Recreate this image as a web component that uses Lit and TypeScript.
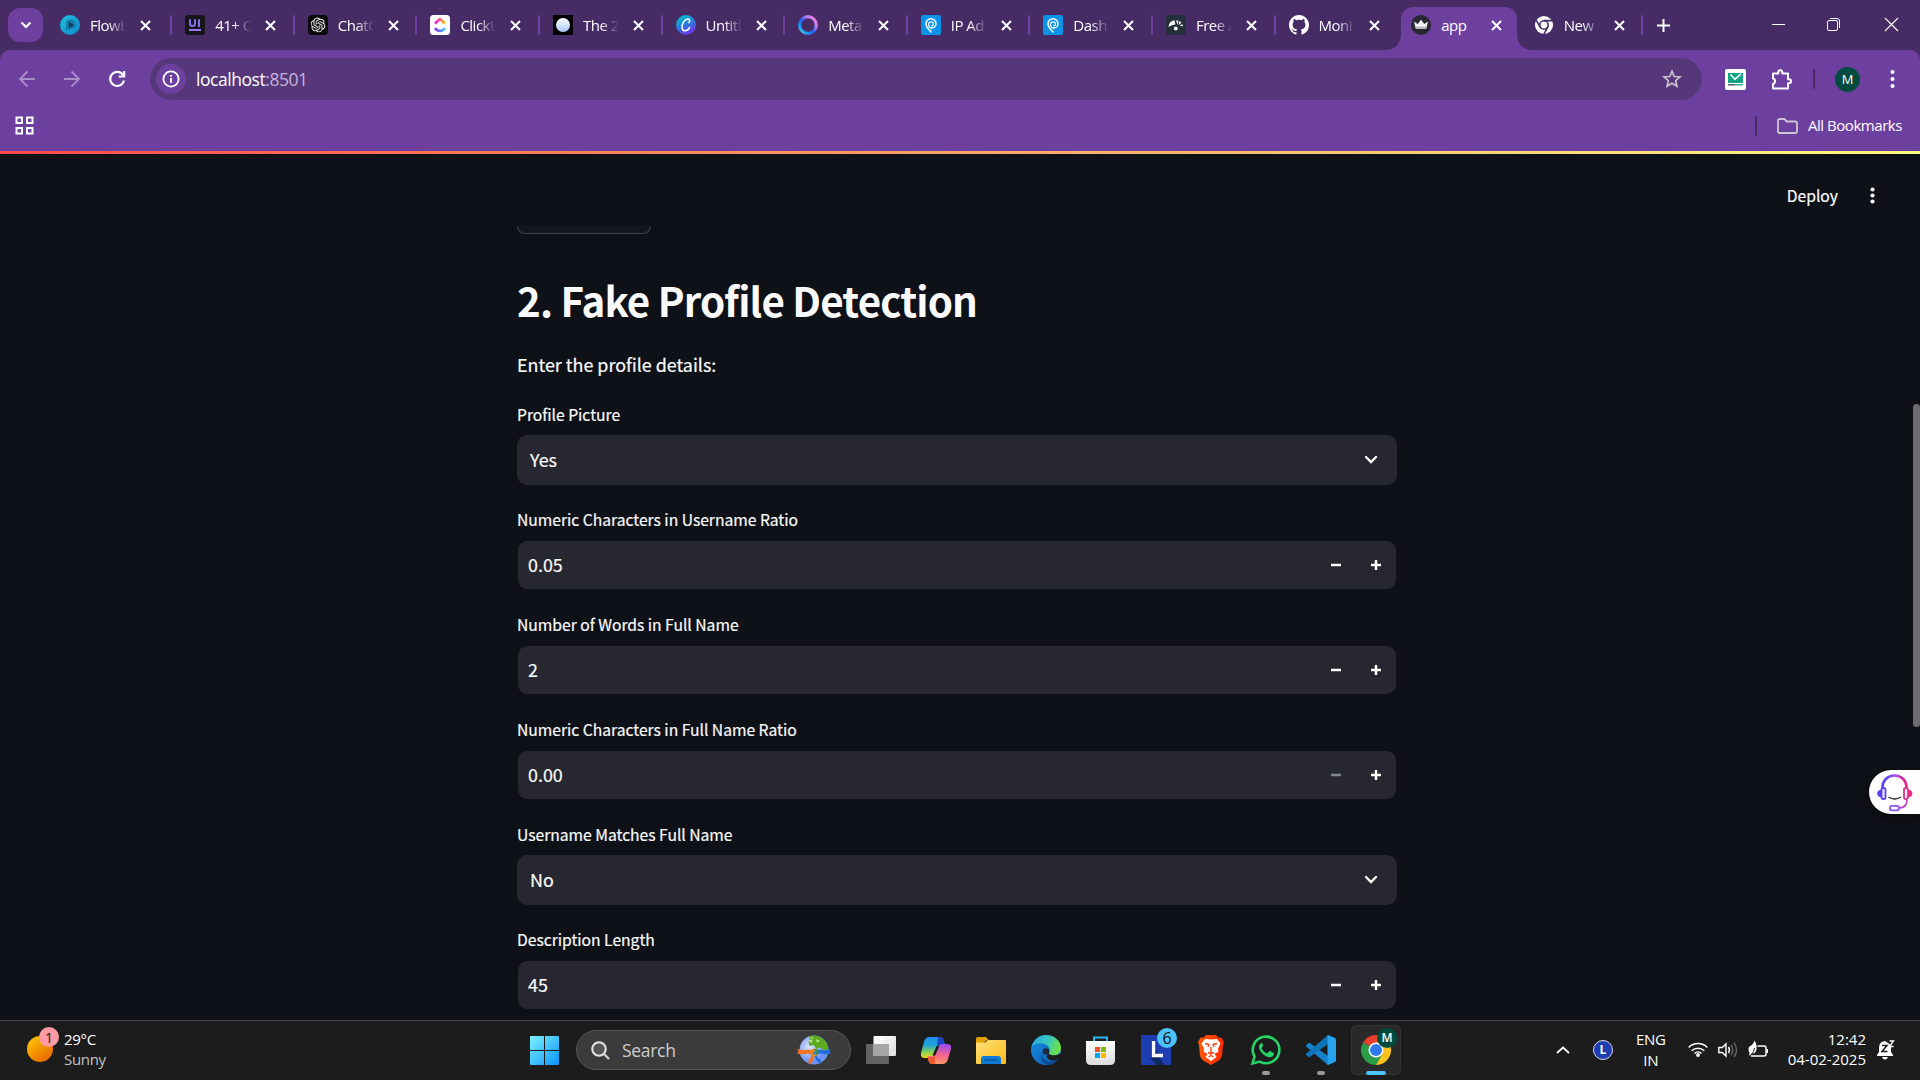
import { LitElement, html, svg, css, nothing, TemplateResult } from "lit";
import { customElement, property } from "lit/decorators.js";

type Art = TemplateResult;

const icon = (w: number, h: number, box: string, body: Art) =>
  html`<svg width=${w} height=${h} viewBox=${box} fill="none" style="display:block;flex:none;overflow:visible">${body}</svg>`;

const OPENAI =
  "M22.2819 9.8211a5.9847 5.9847 0 0 0-.5157-4.9108 6.0462 6.0462 0 0 0-6.5098-2.9A6.0651 6.0651 0 0 0 4.9807 4.1818a5.9847 5.9847 0 0 0-3.9977 2.9 6.0462 6.0462 0 0 0 .7427 7.0966 5.98 5.98 0 0 0 .511 4.9107 6.051 6.051 0 0 0 6.5146 2.9001A5.9847 5.9847 0 0 0 13.2599 24a6.0557 6.0557 0 0 0 5.7718-4.2058 5.9894 5.9894 0 0 0 3.9977-2.9001 6.0557 6.0557 0 0 0-.7475-7.0729zm-9.022 12.6081a4.4755 4.4755 0 0 1-2.8764-1.0408l.1419-.0804 4.7783-2.7582a.7948.7948 0 0 0 .3927-.6813v-6.7369l2.02 1.1686a.071.071 0 0 1 .038.052v5.5826a4.504 4.504 0 0 1-4.4945 4.4944zm-9.6607-4.1254a4.4708 4.4708 0 0 1-.5346-3.0137l.142.0852 4.783 2.7582a.7712.7712 0 0 0 .7806 0l5.8428-3.3685v2.3324a.0804.0804 0 0 1-.0332.0615L9.74 19.9502a4.4992 4.4992 0 0 1-6.1408-1.6464zM2.3408 7.8956a4.485 4.485 0 0 1 2.3655-1.9728V11.6a.7664.7664 0 0 0 .3879.6765l5.8144 3.3543-2.0201 1.1685a.0757.0757 0 0 1-.071 0l-4.8303-2.7865A4.504 4.504 0 0 1 2.3408 7.872zm16.5963 3.8558L13.1038 8.364 15.1192 7.2a.0757.0757 0 0 1 .071 0l4.8303 2.7913a4.4944 4.4944 0 0 1-.6765 8.1042v-5.6772a.79.79 0 0 0-.407-.667zm2.0107-3.0231l-.142-.0852-4.7735-2.7818a.7759.7759 0 0 0-.7854 0L9.409 9.2297V6.8974a.0662.0662 0 0 1 .0284-.0615l4.8303-2.7866a4.4992 4.4992 0 0 1 6.6802 4.66zM8.3065 12.863l-2.02-1.1638a.0804.0804 0 0 1-.038-.0567V6.0742a4.4992 4.4992 0 0 1 7.3757-3.4537l-.142.0805L8.704 5.459a.7948.7948 0 0 0-.3927.6813zm1.0976-2.3654l2.602-1.4998 2.6069 1.4998v2.9994l-2.5974 1.4997-2.6067-1.4997Z";
const GITHUB =
  "M8 0C3.58 0 0 3.58 0 8c0 3.54 2.29 6.53 5.47 7.59.4.07.55-.17.55-.38 0-.19-.01-.82-.01-1.49-2.01.37-2.53-.49-2.69-.94-.09-.23-.48-.94-.82-1.13-.28-.15-.68-.52-.01-.53.63-.01 1.08.58 1.23.82.72 1.21 1.87.87 2.33.66.07-.52.28-.87.51-1.07-1.78-.2-3.64-.89-3.64-3.95 0-.87.31-1.59.82-2.15-.08-.2-.36-1.02.08-2.12 0 0 .67-.21 2.2.82.64-.18 1.32-.27 2-.27s1.36.09 2 .27c1.53-1.04 2.2-.82 2.2-.82.44 1.1.16 1.92.08 2.12.51.56.82 1.27.82 2.15 0 3.07-1.87 3.75-3.65 3.95.29.25.54.73.54 1.48 0 1.07-.01 1.93-.01 2.2 0 .21.15.46.55.38A8.01 8.01 0 0 0 16 8c0-4.42-3.58-8-8-8z";

const pin = svg`<rect width="20" height="20" rx="2" fill="#0b93e8"/>
  <path d="M10.200 17C7 14 5 11.500 5 8.700a5 5 0 0 1 10 0c0 2.600-2 4.300-4.300 4.300" stroke="#fff" stroke-width="1.500" stroke-linecap="round"/><path d="M10.500 13.200c-2-.4-3-2-3-4.200a2.600 2.600 0 0 1 5.100-.2c0 1.300-.9 2-1.900 2.100" stroke="#fff" stroke-width="1.200" stroke-linecap="round"/>`;

const FAV: Record<string, Art> = {
  flow: svg`<defs><linearGradient id="fl" x1="0" y1="0" x2="1" y2="1"><stop stop-color="#1cc0e0"/><stop offset="1" stop-color="#1288c8"/></linearGradient></defs>
    <circle cx="10" cy="10" r="10" fill="url(#fl)"/><path d="M6 15.500V8q0-3.500 4.500-3.500T16 8.500q.5 4.500-4 5.500-4 .8-6 1.500z" fill="#127fae"/><path d="M8.500 6.500 14 10l-5 3.500z" fill="#113a66"/>`,
  ui: svg`<rect width="20" height="20" rx="3" fill="#15151a"/><path d="M5 4.200v4.300a2.500 2.500 0 0 0 5 0V4.200M14 4.200V12" stroke="#8170f2" stroke-width="2"/><path d="M4 15h12" stroke="#9a78f5" stroke-width="2"/>`,
  gpt: svg`<rect width="20" height="20" rx="4" fill="#0a0a0a"/><path transform="translate(2.600 2.600) scale(.615)" d=${OPENAI} fill="#f1f1f1"/>`,
  click: svg`<rect width="20" height="20" rx="3.500" fill="#fff"/><defs><linearGradient id="c1"><stop stop-color="#ff02f0"/><stop offset="1" stop-color="#ffc800"/></linearGradient><linearGradient id="c2"><stop stop-color="#8930fd"/><stop offset="1" stop-color="#49ccf9"/></linearGradient></defs>
    <path d="m5 8.500 5-4.500 5 4.500" stroke="url(#c1)" stroke-width="2.600"/><path d="M4.800 13.300q5.200 5.200 10.400 0" stroke="url(#c2)" stroke-width="2.800"/>`,
  the: svg`<defs><linearGradient id="tg" x1="0" y1="0" x2="0" y2="1"><stop stop-color="#fff"/><stop offset="1" stop-color="#a9c8fb"/></linearGradient></defs><rect width="20" height="20" fill="#000"/><circle cx="10" cy="10" r="7" fill="url(#tg)"/>`,
  canva: svg`<defs><linearGradient id="cv" x1=".2" y1="0" x2=".7" y2="1"><stop stop-color="#00c4cc"/><stop offset=".5" stop-color="#2a7be0"/><stop offset="1" stop-color="#7d2ae8"/></linearGradient></defs><circle cx="10" cy="10" r="10" fill="url(#cv)"/>
    <path d="M13 7.600c1.400-1.700.6-3.800-1.500-3.500C8.600 4.500 6 8.500 6 11.800c0 2.600 1.300 4 3 4 1.900 0 3.600-1.300 4.600-3.300" stroke="#fff" stroke-width="1.500" stroke-linecap="round"/>`,
  meta: svg`<defs><linearGradient id="mg" x1="1" y1="0" x2="0" y2="1"><stop stop-color="#ff7bd0"/><stop offset=".3" stop-color="#b77cf5"/><stop offset=".55" stop-color="#1b62f0"/><stop offset=".8" stop-color="#1a9bf5"/><stop offset="1" stop-color="#6ff0d8"/></linearGradient></defs><circle cx="10" cy="10" r="8.300" stroke="url(#mg)" stroke-width="3.300"/>`,
  pin,
  free: svg`<rect width="20" height="20" rx="3.500" fill="#262f3c"/><path d="M2.500 12Q3 6 8.500 5.200l.8 4.300Q5.500 9.500 2.500 12z" fill="#fff"/><path d="m10 5.500 2.500.3-1 4zM13.500 6l2 1.500-3 2.700zM16 9l1.300 2.300-3.500-.2z" fill="#fff"/><circle cx="9.800" cy="13.500" r="1.900" fill="#fff"/>`,
  github: svg`<path transform="scale(1.250)" d=${GITHUB} fill="#fff"/>`,
  crown: svg`<circle cx="10" cy="10" r="10" fill="#262730"/><path d="m3 6.500 3.700 2.600L10 4.800l3.300 4.300L17 6.500l-1.800 7.300H4.800z" fill="#f4f4f4"/><path d="m4.300 11.500.6 2.300h10.300l.5-2.300z" fill="#b9b9bd"/>`,
  chrome: svg`<circle cx="10" cy="10" r="9" fill="#fff"/><circle cx="10" cy="10" r="4.200" fill="#fff" stroke="#462b65" stroke-width="1.600"/><path d="M10 5.600h8M6.200 12.200 2.300 5.300M13.800 12.200l-4 7" stroke="#462b65" stroke-width="1.600"/>`,
};

const TABS: { fav: string; text: string; active?: boolean }[] = [
  { fav: "flow", text: "Flowb" },
  { fav: "ui", text: "41+ C" },
  { fav: "gpt", text: "ChatG" },
  { fav: "click", text: "ClickU" },
  { fav: "the", text: "The 2" },
  { fav: "canva", text: "Untitl" },
  { fav: "meta", text: "Meta" },
  { fav: "pin", text: "IP Ad" },
  { fav: "pin", text: "Dash" },
  { fav: "free", text: "Free A" },
  { fav: "github", text: "Moni" },
  { fav: "crown", text: "app", active: true },
  { fav: "chrome", text: "New" },
];

const UI_FONT = css`"Open Sans", "Noto Sans", sans-serif`;
const APP_FONT = css`"Noto Sans CJK JP", "Noto Sans", sans-serif`;

@customElement("browser-tabs")
class BrowserTabs extends LitElement {
  static styles = css`
    :host { display: flex; height: 50px; background: #462b65; padding-left: 8px; box-sizing: border-box; font: 15px ${UI_FONT}; color: #fff; }
    .drop { width: 35px; height: 34px; margin: 8px 4px 0 0; border-radius: 12px; background: #6d40a0; display: grid; place-items: center; flex: none; }
    .tab { position: relative; display: flex; align-items: center; width: 122.600px; box-sizing: border-box; padding-left: 13px; flex: none; }
    .tab.first { width: 125.200px; }
    .tab.sep::after { content: ""; position: absolute; right: 0; top: 15px; width: 2px; height: 20px; border-radius: 1px; background: #6d40a0; }
    .title { width: 36px; margin-left: 10px; height: 24px; line-height: 24px; white-space: nowrap; letter-spacing: -0.500px; mask-image: linear-gradient(90deg, #000 50%, transparent 100%); }
    .active .title { mask-image: none; }
    .close { position: relative; margin-left: 14px; }
    .shape { position: absolute; left: 3px; right: 3.500px; top: 7px; bottom: 0; border-radius: 12px 12px 0 0; background: #6d40a0; }
    .shape::before, .shape::after { content: ""; position: absolute; bottom: 0; width: 14px; height: 14px; }
    .shape::before { right: 100%; background: radial-gradient(circle at 0 0, transparent 13.500px, #6d40a0 14px); }
    .shape::after { left: 100%; background: radial-gradient(circle at 100% 0, transparent 13.500px, #6d40a0 14px); }
    .active > svg, .active > .title { position: relative; }
    .plus { margin-left: 14px; align-self: center; }
    .win { margin-left: auto; display: flex; align-items: center; padding: 0 22px 2px 0; }
    .win svg { margin-left: 42px; }
    .win svg:last-child { margin-left: 45px; }
  `;
  render() {
    const cross = svg`<path d="m1 1 9 9M10 1l-9 9" stroke="#fff" stroke-width="2"/>`;
    return html`
      <div class="drop">${icon(12, 8, "0 0 12 8", svg`<path d="m1.500 1.500 4.500 4.500 4.500-4.500" stroke="#fff" stroke-width="2.200"/>`)}</div>
      ${TABS.map((t, i) => html`
        <div class="tab ${i === 0 ? "first" : ""} ${t.active ? "active" : ""} ${i === 10 || i === 11 ? "" : "sep"}">
          ${t.active ? html`<div class="shape"></div>` : nothing}
          ${icon(20, 20, "0 0 20 20", FAV[t.fav])}
          <div class="title">${t.text}</div>
          <div class="close">${icon(11, 11, "0 0 11 11", cross)}</div>
        </div>`)}
      <div class="plus">${icon(13, 13, "0 0 13 13", svg`<path d="M6.500 0v13M0 6.500h13" stroke="#fff" stroke-width="2"/>`)}</div>
      <div class="win">
        ${icon(13, 13, "0 0 13 13", svg`<path d="M0 6.500h13" stroke="#fff"/>`)}
        ${icon(13, 13, "0 0 13 13", svg`<rect x=".5" y="2.500" width="10" height="10" rx="1.500" stroke="#fff"/><path d="M3 .500h7a2.500 2.500 0 0 1 2.500 2.500v7" stroke="#fff"/>`)}
        ${icon(13, 13, "0 0 13 13", svg`<path d="m0 0 13 13M13 0 0 13" stroke="#fff" stroke-width="1.100"/>`)}
      </div>`;
  }
}

@customElement("browser-toolbar")
class BrowserToolbar extends LitElement {
  static styles = css`
    :host { display: block; background: #462b65; font-family: ${UI_FONT}; color: #fff; }
    .panel { height: 101px; background: #6d40a0; border-radius: 10px 10px 0 0; }
    .row { display: flex; align-items: center; height: 58px; }
    .nav { display: flex; gap: 27px; padding-left: 18px; width: 132px; }
    .omni { display: flex; align-items: center; width: 1552px; height: 42px; border-radius: 21px; background: #56387a; box-sizing: border-box; padding: 0 20px 0 6px; }
    .info { width: 30px; height: 30px; border-radius: 50%; background: #6d40a0; display: grid; place-items: center; }
    .url { margin-left: 10px; font-size: 17.500px; line-height: 24px; letter-spacing: -0.450px; flex: 1; }
    .url span { color: #c5b3d9; }
    .ext { display: flex; align-items: center; padding-left: 23px; }
    .sep { width: 2px; height: 20px; border-radius: 1px; background: #462b65; }
    .avatar { width: 25px; height: 25px; border-radius: 50%; background: #004d40; font-size: 13px; line-height: 25px; text-align: center; }
    .book { display: flex; align-items: center; height: 43px; padding: 0 18px 0 15px; margin-top: -4px; }
    .all { font-size: 15px; letter-spacing: -0.450px; line-height: 22px; white-space: nowrap; padding-bottom: 2px; }
  `;
  render() {
    const gap = (n: number) => html`<div style="width:${n}px"></div>`;
    return html`<div class="panel">
      <div class="row">
        <div class="nav">
          ${icon(18, 18, "0 0 18 18", svg`<path d="M17 9H2M9.500 1.500 2 9l7.500 7.500" stroke="#a88cc8" stroke-width="1.800"/>`)}
          ${icon(18, 18, "0 0 18 18", svg`<path d="M1 9h15M8.500 1.500 16 9l-7.500 7.500" stroke="#a88cc8" stroke-width="1.800"/>`)}
          ${icon(18, 18, "0 0 18 18", svg`<path d="M15 5A7 7 0 1 0 16 10.500M16.200 1v5.500h-5.500" stroke="#fff" stroke-width="2.100"/>`)}
        </div>
        <div class="omni">
          <div class="info">${icon(18, 18, "0 0 18 18", svg`<circle cx="9" cy="9" r="7.600" stroke="#fff" stroke-width="1.800"/><path d="M9 8v5M9 5v1.800" stroke="#fff" stroke-width="1.800"/>`)}</div>
          <div class="url">localhost<span>:8501</span></div>
          ${icon(20, 20, "0 0 20 20", svg`<path d="m10 2.200 2.200 5.300 5.700.5-4.300 3.700 1.300 5.600-4.900-3-4.900 3 1.300-5.600L2.100 8l5.700-.5z" stroke="#c9c5cc" stroke-width="1.700"/>`)}
        </div>
        <div class="ext">
          ${icon(21, 21, "0 0 21 21", svg`<rect width="21" height="21" rx="2" fill="#fff"/><rect x="3" y="4" width="15" height="10" fill="#14a383"/><path d="m5.500 5.500 4.500 4.700L16 5" stroke="#fff" stroke-width="1.600"/><path d="M3 15.800h7" stroke="#27424a" stroke-width="1.300"/><path d="M10 15.800h8" stroke="#14a383" stroke-width="1.300"/>`)}
          ${gap(25)}
          ${icon(21, 21, "0 0 21 21", svg`<path d="M2 4.500h5.300V3.300a2 2 0 0 1 4 0v1.200H17v5.800h1a2 2 0 0 1 0 4h-1v5.200H2v-4.600a2.800 2.800 0 0 0 0-5.400z" stroke="#fff" stroke-width="2" stroke-linejoin="round"/>`)}
          ${gap(21)}<div class="sep"></div>${gap(20)}
          <div class="avatar">M</div>
          ${gap(30)}
          ${icon(5, 18, "0 0 5 18", svg`<circle cx="2.500" cy="2" r="2" fill="#fff"/><circle cx="2.500" cy="9" r="2" fill="#fff"/><circle cx="2.500" cy="16" r="2" fill="#fff"/>`)}
        </div>
      </div>
      <div class="book">
        ${icon(19, 19, "0 0 19 19", svg`<path d="M1.500 1.500h5.500v5.500H1.500zM12 1.500h5.500v5.500H12zM1.500 12h5.500v5.500H1.500zM12 12h5.500v5.500H12z" stroke="#fff" stroke-width="2"/>`)}
        <div style="flex:1"></div>
        <div class="sep"></div>${gap(20)}
        ${icon(21, 16, "0 0 21 16", svg`<path d="M1 2.500q0-1.500 1.500-1.500h5l2 2.500h9q1.500 0 1.500 1.500v8.500q0 1.500-1.500 1.500h-16Q1 15 1 13.500z" stroke="#cdc6d4" stroke-width="1.800"/>`)}
        ${gap(9.5)}<div class="all">All Bookmarks</div>
      </div>
    </div>`;
  }
}

@customElement("form-field")
class FormField extends LitElement {
  @property() label = "";
  @property() value = "";
  @property() kind = "number";
  @property({ type: Boolean }) floor = false;
  static styles = css`
    :host { display: block; height: 105px; color: #fafafa; font-family: ${APP_FONT}; -webkit-text-stroke: 0.200px #fafafa; }
    .label { font-size: 15.700px; line-height: 25px; height: 33px; white-space: nowrap; letter-spacing: -0.030px; }
    .box { display: flex; align-items: center; height: 48px; margin: 1px; border-radius: 9px; background: #262730; font-size: 17.900px; box-sizing: border-box; padding: 0 15px 0 10px; line-height: 28px; }
    .box.select { height: 50px; margin: 0; border-radius: 10px; padding: 0 19px 0 13px; }
    .value { flex: 1; padding-bottom: 2px; }
    .steps { display: flex; gap: 30px; }
  `;
  render() {
    return html`<div class="label">${this.label}</div>
      <div class="box ${this.kind}">
        <div class="value">${this.value}</div>
        ${this.kind === "select"
          ? icon(14, 10, "0 0 14 10", svg`<path d="m2 2 5 5 5-5" stroke="#fafafa" stroke-width="2.400" stroke-linecap="round"/>`)
          : html`<div class="steps">
              ${icon(10, 10, "0 0 8 8", svg`<path d="M0 3v2h8V3H0z" fill=${this.floor ? "#808495" : "#fff"}/>`)}
              ${icon(10, 10, "0 0 8 8", svg`<path d="M3 0v3H0v2h3v3h2V5h3V3H5V0z" fill="#fff"/>`)}
            </div>`}
      </div>`;
  }
}

@customElement("profile-page")
class ProfilePage extends LitElement {
  static styles = css`
    :host { display: block; position: relative; height: 869px; background: #0e1117; color: #fafafa; font-family: ${APP_FONT}; overflow: hidden; }
    .line { height: 3px; background: linear-gradient(90deg, #ff4b4b, #fffd80); }
    .head { display: flex; align-items: center; justify-content: flex-end; padding: 11px 45px 0 0; height: 61px; }
    .deploy { font-size: 15.700px; line-height: 24px; margin-right: 32px; -webkit-text-stroke: 0.200px #fafafa; }
    .body { width: 880px; margin-left: 517px; height: 794px; overflow: hidden; }
    .btn { width: 134px; height: 8px; box-sizing: border-box; border: 1px solid #41444c; border-top: 0; border-radius: 0 0 10px 10px; background: #131720; }
    h2 { margin: 39px 0 0; font-size: 40.300px; font-weight: 700; line-height: 54px; white-space: nowrap; letter-spacing: -0.850px; }
    p { margin: 22px 0 23px; font-size: 17.900px; line-height: 30px; -webkit-text-stroke: 0.200px #fafafa; }
    .scroll { position: absolute; right: 0; top: 253px; width: 7px; height: 323px; border-radius: 4px; background: #6b6c70; }
    .help { position: absolute; right: 0; top: 619px; width: 51px; height: 44px; border-radius: 22px 0 0 22px; background: #fff; box-shadow: 0 3px 12px #0008; }
    .help svg { margin: 3px 0 0 7px; }
  `;
  render() {
    return html`
      <div class="line"></div>
      <div class="head"><div class="deploy">Deploy</div>
        ${icon(5, 17, "0 0 5 17", svg`<circle cx="2.500" cy="2.500" r="2.100" fill="#fafafa"/><circle cx="2.500" cy="8.500" r="2.100" fill="#fafafa"/><circle cx="2.500" cy="14.500" r="2.100" fill="#fafafa"/>`)}
      </div>
      <div class="body">
        <div class="btn"></div>
        <h2>2. Fake Profile Detection</h2>
        <p>Enter the profile details:</p>
        <form-field kind="select" label="Profile Picture" value="Yes"></form-field>
        <form-field label="Numeric Characters in Username Ratio" value="0.05"></form-field>
        <form-field label="Number of Words in Full Name" value="2"></form-field>
        <form-field label="Numeric Characters in Full Name Ratio" value="0.00" floor></form-field>
        <form-field kind="select" label="Username Matches Full Name" value="No"></form-field>
        <form-field label="Description Length" value="45"></form-field>
      </div>
      <div class="scroll"></div>
      <div class="help">${icon(37, 39, "0 0 37 39", svg`
        <defs><linearGradient id="hg"><stop stop-color="#4a3cf0"/><stop offset=".5" stop-color="#9a50f0"/><stop offset="1" stop-color="#ee1a7a"/></linearGradient></defs>
        <path d="M6.500 15C6.500 7 12 2.500 18.500 2.500S30.500 7 30.500 15" stroke="url(#hg)" stroke-width="2.600"/>
        <rect x="5.500" y="15" width="4" height="11" rx="1.800" fill="#e9e4ff" stroke="#5a45f2" stroke-width="1.800"/><rect x="28" y="15" width="4" height="11" rx="1.800" fill="#ffe4f2" stroke="#d43a9c" stroke-width="1.800"/>
        <path d="M5 17q-3.500.5-3.500 3.500T5 24z" fill="#5a45f2" stroke="#5a45f2"/><path d="M32.500 17q3.500.5 3.500 3.500t-3.500 3.500z" fill="#ec2a86" stroke="#ec2a86"/>
        <path d="M31 26.500q0 8.500-8 8.500" stroke="#c04ac4" stroke-width="1.800"/><rect x="14" y="32.800" width="9" height="4.600" rx="2" fill="#fff" stroke="#8f55f2" stroke-width="1.800"/>
        <path d="M12.500 24q6 4 12.500 0" stroke="#222" stroke-width="1.300"/>`)}</div>`;
  }
}

const win = svg`<defs><linearGradient id="wg" x1="0" y1="0" x2="1" y2="1"><stop stop-color="#7df2ff"/><stop offset="1" stop-color="#0a93fb"/></linearGradient></defs>
  <path d="M1 0h13v14H0V1q0-1 1-1zM15 0h13q1 0 1 1v13H15zM0 15h14v14H1q-1 0-1-1zM15 15h14v13q0 1-1 1H15z" fill="url(#wg)"/>`;
const globe = svg`<defs><radialGradient id="gg" cx=".35" cy=".4"><stop stop-color="#dfeaff"/><stop offset="1" stop-color="#6f92f5"/></radialGradient></defs>
  <circle cx="17" cy="15" r="14.500" fill="url(#gg)"/><path d="M12 1.500Q18-1 24 2.500q7 4.500 7.500 12.500l-5 .5-3-3-4 1.500-3-4-4 1-1-4 2-1.500z" fill="#5cab1f"/><path d="M11 5l5 0-2 3zM19 4l4 2-3 2zM13 2.500l4 .3-2 1.400z" fill="#b5e48e"/>
  <path d="M0 14q6 1.500 12.500.5l4 2.500-1.500 3-4-1.500Q5 20 0 18.500l1.500-2z" fill="#f4711f"/><path d="M34 14q-6 2-12 .5l-4 2.500 1 3 4-1.500q6 1.500 11 0l-1.500-2z" fill="#246fe5"/>
  <path d="M15 18.500q-1 5-4 8l2 3q4-4 4.500-9z" fill="#f4711f"/><path d="M18.500 18.500q2 5 6 7l-2 3q-4-3-5.500-8z" fill="#246fe5"/>
  <path d="M13.500 15.500q4-4 7 0v4.500q-3.500 3-6.500 0z" fill="#e58b1c"/><path d="M17 14q4-.5 5 3l-3 4q1-4-2-7z" fill="#2c8f52"/><path d="M16.500 16.500h2v3h-2z" fill="#246fe5"/>`;
const task = svg`<defs><linearGradient id="t1" x1="0" y1="0" x2="1" y2="1"><stop stop-color="#fff"/><stop offset="1" stop-color="#ddd"/></linearGradient></defs><rect x="0" y="8" width="23" height="20" rx="1" fill="#636363"/><rect x="7.500" y="0" width="22.500" height="20" rx="1" fill="url(#t1)"/><path d="M7.500 8H22q1 0 1 1v11H8.500q-1 0-1-1z" fill="#a6a6a6"/>`;
const copilot = svg`<defs><linearGradient id="p1" x1="0" y1="0" x2="0" y2="1"><stop stop-color="#1a8fe8"/><stop offset=".4" stop-color="#22a4d8"/><stop offset=".7" stop-color="#7fcf5a"/><stop offset="1" stop-color="#f5d71c"/></linearGradient><linearGradient id="p2" x1=".5" y1="0" x2=".3" y2="1"><stop stop-color="#a24bea"/><stop offset=".5" stop-color="#f2648e"/><stop offset="1" stop-color="#ffa061"/></linearGradient></defs>
  <path d="M9 0h10q3 0 4 5l1 3h-5q-3 0-4 4l-2 6q-1 3-5 3H4q-5 0-4-5L3 5q1-5 6-5z" fill="url(#p1)"/><path d="M17 0h2q3 0 4 5l1 3h-5q-2 0-3 1z" fill="#1d44c4"/>
  <path d="M21 27H11q-3 0-4-5l-1-3h5q3 0 4-4l2-5q1-3 5-3h4q5 0 4 5l-3 10q-1 5-6 5z" fill="url(#p2)"/><path d="M14 27h-3q-3 0-4-5l-.500-2H11q2 0 3-1z" fill="#ef5a30"/><path d="m15.500 9-4 9.500h2.800l4-9.500z" fill="#1c1c1c"/>`;
const folder = svg`<defs><linearGradient id="f1" x1="0" y1="0" x2="1" y2="1"><stop stop-color="#ffe07a"/><stop offset="1" stop-color="#fbbc16"/></linearGradient></defs><path d="M0 1.500Q0 0 1.500 0H10l3 3.500h-3L8 6H0z" fill="#e0a000"/><path d="M0 5.500h9l3-2.500h17q1 0 1 1v22q0 1-1 1H1q-1 0-1-1z" fill="url(#f1)"/><path d="M5 27v-5q0-3 3-3h14q3 0 3 3v5z" fill="#0f7ad6"/><path d="M8.500 23h13" stroke="#0a4f95" stroke-width="1.300"/>`;
const edge = svg`<defs><linearGradient id="e1" x1="0" y1="0" x2="1" y2=".3"><stop stop-color="#2aa8e8"/><stop offset=".6" stop-color="#37c6c0"/><stop offset="1" stop-color="#6be04a"/></linearGradient><linearGradient id="e2" x1="0" y1="0" x2="1" y2="1"><stop stop-color="#1589dc"/><stop offset="1" stop-color="#0e5fb6"/></linearGradient></defs>
  <circle cx="15" cy="15" r="15" fill="#1272c9"/><path d="M.5 12.500C2 5 8 0 15 0c8.500 0 15 6 15 13 0 5-4 7.500-8 7.500-3 0-4.600-1-4.600-2.200 0-1 1.300-1.500 1.300-3.500C18.700 11 14 8.500 9.500 8.500c-4 0-7.300 1.500-9 4z" fill="url(#e1)"/><path d="M.3 12.500C2 10 5.500 8.500 9.500 8.500c3 0 6 1.200 7.500 3-4 .5-7 4-7 8 0 5 4 9.500 9 10C9 32-.5 24.500.3 12.500z" fill="url(#e2)"/><path d="M11 17c-1 7 6 12.500 16 7.500-2 3-6 5.200-9.500 5.400C11 28 8.500 22 11 17z" fill="#0c4a94"/><path d="M17.500 18c1 2 5 3.500 10.500 1.200L31 18v5l-3 1.200c-7 3-12 .8-12.500-3.200z" fill="#1c1c1c"/><circle cx="15" cy="16.500" r="3.300" fill="#1c2a3c"/>`;
const store = svg`<defs><linearGradient id="s1" x1="0" y1="0" x2="0" y2="1"><stop stop-color="#fff"/><stop offset="1" stop-color="#dcdcdc"/></linearGradient></defs><path d="M8 7V1.500h13V7" stroke="#2fb8ec" stroke-width="2"/><path d="M0 5h29v19q0 5-5 5H5q-5 0-5-5z" fill="url(#s1)"/><path d="M9 11h5v5H9z" fill="#f25022"/><path d="M15 11h5v5h-5z" fill="#7fba00"/><path d="M9 17h5v5H9z" fill="#00a4ef"/><path d="M15 17h5v5h-5z" fill="#ffb900"/>`;
const lApp = svg`<rect width="30" height="30" fill="#1e3db0"/><path d="M10 6v18l5 6h8z" fill="#102a66"/><path d="M12.500 6v14.500H22" stroke="#fff" stroke-width="3.400"/>`;
const brave = svg`<defs><linearGradient id="b1"><stop stop-color="#ff5a00"/><stop offset="1" stop-color="#ff2600"/></linearGradient></defs><path d="M8 0h10l2.500 2.800 3-.3L26 7l-1 3-1 11q-1 3-4 5l-7 4-7-4q-3-2-4-5L1 10 0 7l2.500-4.500 3 .3z" fill="url(#b1)"/><path d="m13 4.500 6-.5 3.500 4.500-2.500 5 .5 3-4 2.500 2 3-5.500 4-5.500-4 2-3-4-2.500.5-3-2.500-5L7 4z" fill="#fff"/><path d="m7 8.500 4 1-1 2.500M19 8.500l-4 1 1 2.500M13 12v6M10 17.500l3 1.500 3-1.500M10.500 22l2.500-1.500 2.500 1.500" stroke="#fb4210" stroke-width="1.400"/>`;
const whats = svg`<path d="m1.500 28.500 2-7A13.300 13.300 0 1 1 8.700 26.600z" stroke="#25d366" stroke-width="2.600"/><path d="M10.700 8c-.6 0-2.700 1-2.700 4 0 2.500 2.200 5.500 4.200 7.300 2.200 1.900 4.500 3 6.800 3 2 0 3.800-1.500 3.800-3.200 0-.9 0-1.100-.4-1.300l-3.400-1.700c-.4-.2-.7-.1-1 .3l-1.400 1.700c-.3.300-.5.400-1 .100-2.200-1-3.900-2.600-5-4.600-.2-.4-.1-.6.200-.9l1-1.300c.2-.4.200-.6.100-1L11.700 8.400c-.2-.4-.5-.4-1-.4z" fill="#25d366"/>`;
const code = svg`<path d="M0 10.500 3 7.500 22 21v9L0 11.500z" fill="#1482cb"/><path d="M0 20 3 22.500 22 9V0L0 18.800z" fill="#0f73b8"/><path d="m22 0 7 3q1 .5 1 1.500v21q0 1-1 1.500l-7 3-.5-.5v-29z" fill="#26a2ee"/>`;
const chrome = svg`<path d="M15 15 2 7.500a15 15 0 0 1 26 0z" fill="#e8402f"/><path d="M15 15 2 7.500A15 15 0 0 0 15 30l7-11z" fill="#2b9d49"/><path d="M15 7.500h13A15 15 0 0 1 15 30l6.500-11.200z" fill="#fcc31e"/><circle cx="15" cy="15" r="7.500" fill="#fff"/><circle cx="15" cy="15" r="6" fill="#2d7bea"/>`;

@customElement("task-bar")
class TaskBar extends LitElement {
  static styles = css`
    :host { display: flex; height: 60px; box-sizing: border-box; border-top: 1px solid #454545; background: #1c1c1c; font: 15px/20px ${UI_FONT}; color: #fff; letter-spacing: -0.300px; }
    .weather { display: flex; width: 516px; box-sizing: border-box; padding: 8px 0 0 27px; }
    .sun { position: relative; width: 26px; height: 26px; margin: 7px 11px 0 0; border-radius: 50%; background: linear-gradient(145deg, #ffc400 10%, #e86400 90%); }
    .dot { position: absolute; right: -6px; top: -9px; width: 20px; height: 20px; border-radius: 50%; background: #ff99a4; color: #222; text-align: center; }
    .dim { color: #c4c4c4; }
    .apps { display: flex; }
    .slot { position: relative; width: 55px; display: grid; place-items: center; padding-bottom: 1px; }
    .slot.start { width: 56px; }
    .search { display: flex; align-items: center; width: 275px; height: 40px; margin: 9px 2px 0 4px; border-radius: 20px; box-sizing: border-box; border: 1px solid #555; background: #3b3b3b; font-size: 17.500px; color: #cfcfcf; padding: 0 19px 0 14px; }
    .search span { flex: 1; margin-left: 12px; }
    .tile { width: 50px; height: 50px; border-radius: 6px; background: #292929; box-shadow: inset 0 0 0 1px #343434; display: grid; place-items: center; }
    .badge { position: absolute; left: 29px; top: 7px; width: 20px; height: 20px; border-radius: 50%; background: #4cc2ff; color: #111; text-align: center; font-size: 16px; }
    .badge.m { background: #004d40; color: #fff; font-size: 12px; font-weight: 600; }
    .run { position: absolute; bottom: 5px; left: 23.500px; width: 8px; height: 4px; border-radius: 2px; background: #9a9a9a; }
    .run.on { left: 17.500px; width: 20px; background: #4cc2ff; }
    .tray { margin-left: auto; display: flex; align-items: center; padding: 0 26px 2px 0; }
    .lang { text-align: center; width: 40px; line-height: 20.500px; }
    .clock { text-align: right; white-space: nowrap; letter-spacing: 0; padding-bottom: 2px; }
    .coin { width: 18px; height: 18px; border: 1px solid #d8d8e8; border-radius: 50%; background: #1e3db0; font: 700 12px/18px ${UI_FONT}; text-align: center; }
  `;
  render() {
    const slot = (w: number, h: number, body: Art, extra: unknown = nothing) =>
      html`<div class="slot">${icon(w, h, `0 0 ${w} ${h}`, body)}${extra}</div>`;
    const gap = (n: number) => html`<div style="width:${n}px"></div>`;
    return html`
      <div class="weather"><div class="sun"><div class="dot">1</div></div><div>29°C<div class="dim">Sunny</div></div></div>
      <div class="apps">
        <div class="slot start">${icon(29, 29, "0 0 29 29", win)}</div>
        <div class="search">${icon(19, 19, "0 0 19 19", svg`<circle cx="8" cy="8" r="6.800" fill="#555" stroke="#e6e6e6" stroke-width="2"/><path d="m13 13 5 5" stroke="#d0d0d0" stroke-width="2.400"/>`)}<span>Search</span>${icon(34, 30, "0 0 34 30", globe)}</div>
        ${slot(30, 28, task)}${slot(30, 27, copilot)}${slot(30, 27, folder)}${slot(30, 30, edge)}${slot(29, 29, store)}
        ${slot(30, 30, lApp, html`<div class="badge">6</div>`)}
        ${slot(26, 30, brave)}
        ${slot(30, 30, whats, html`<div class="run"></div>`)}
        ${slot(30, 30, code, html`<div class="run"></div>`)}
        <div class="slot"><div class="tile">${icon(30, 30, "0 0 30 30", chrome)}</div><div class="badge m">M</div><div class="run on"></div></div>
      </div>
      <div class="tray">
        ${icon(14, 8, "0 0 14 8", svg`<path d="m1 7 6-5.500L13 7" stroke="#fff" stroke-width="1.700"/>`)}
        ${gap(23)}<div class="coin">L</div>${gap(18)}
        <div class="lang">ENG<br />IN</div>${gap(17)}
        ${icon(20, 15, "0 0 20 15", svg`<path d="M.7 5.500a13 13 0 0 1 18.600 0M3.700 8.700a9 9 0 0 1 12.600 0M6.500 11.500a5 5 0 0 1 7 0" stroke="#fff" stroke-width="1.500"/><circle cx="10" cy="13" r="1.900" fill="#fff"/>`)}
        ${gap(10)}
        ${icon(20, 16, "0 0 20 16", svg`<path d="M.8 5.500h3.500L8 2v12l-3.700-3.500H.8z" stroke="#fff" stroke-width="1.400"/><path d="M10.500 5q2 3 0 6" stroke="#fff" stroke-width="1.400"/><path d="M13 3q3.500 5 0 10M16 .800q5 7.200 0 14.400" stroke="#666" stroke-width="1.400"/>`)}
        ${gap(10)}
        ${icon(20, 18, "0 -1 20 18", svg`<path d="M9.500 4H16q2 0 2 2v6q0 2-2 2H3" stroke="#fff" stroke-width="1.500"/><path d="M18.500 7h1.500v4h-1.500z" fill="#fff"/><path d="M6.500-1.500Q9.500 3 8.300 8.500 7 12 4 11.500L1.500 14V11Q-.5 7 1.500 4.500 5 3 6.500-1.500z" fill="#fff"/><path d="M3 13q3-3 3.500-7" stroke="#1c1c1c"/>`)}
        ${gap(20)}
        <div class="clock">12:42<br />04-02-2025</div>
        ${gap(11)}
        ${icon(17, 20, "0 0 17 20", svg`<path d="M8 1Q2 1.500 2 8v4l-2 3v1h16v-1l-2-3V5z" fill="#fff"/><path d="M5 17h6q-1 2.500-3 2.500T5 17z" fill="#fff"/><path d="M12.500 1h4l-4 5.500h4" stroke="#fff" stroke-width="1.300"/><path d="M5 5.500h5l-5 6h5.500" stroke="#1c1c1c" stroke-width="1.500"/>`)}
      </div>`;
  }
}

@customElement("app-root")
class AppRoot extends LitElement {
  static styles = css`
    :host { display: flex; flex-direction: column; width: 1920px; height: 1080px; overflow: hidden; }
  `;
  render() {
    return html`<browser-tabs></browser-tabs><browser-toolbar></browser-toolbar><profile-page></profile-page><task-bar></task-bar>`;
  }
}
